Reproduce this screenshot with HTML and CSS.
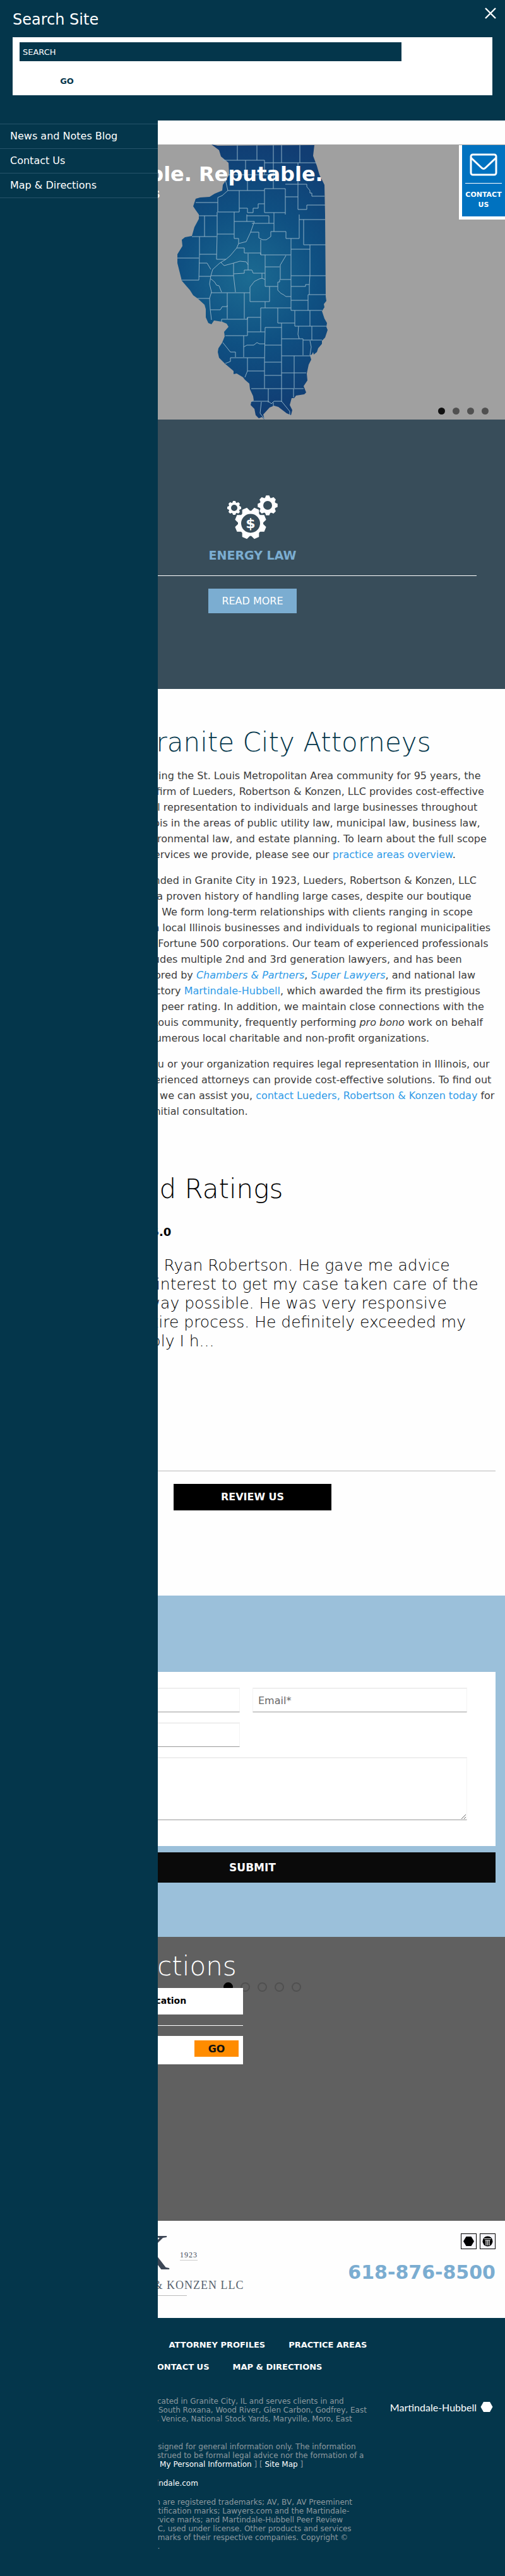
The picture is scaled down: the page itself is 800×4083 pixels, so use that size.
FILE: index.html
```
<!DOCTYPE html>
<html lang="en">
  <head>
    <meta charset="UTF-8" />
    <meta name="viewport" content="width=device-width, initial-scale=1.0" />
    <title>Lueders, Robertson &amp; Konzen, LLC</title>
    <link rel="stylesheet" href="styles.css" />
  </head>
  <body>
    <!-- Slide-out menu -->
    <nav class="drawer" aria-label="Side menu">
      <a href="#">News and Notes Blog</a>
      <a href="#">Contact Us</a>
      <a href="#">Map &amp; Directions</a>
    </nav>

    <!-- Search panel -->
    <div class="search-panel">
      <div class="search-title">Search Site</div>
      <button class="close-btn" type="button" aria-label="Close">
        <svg width="20" height="20" viewBox="0 0 20 20"><path d="M2 2L18 18M18 2L2 18" stroke="#fff" stroke-width="2.4" /></svg>
      </button>
      <form class="search-form">
        <input type="text" class="search-input" placeholder="SEARCH" aria-label="Search" />
        <button type="button" class="search-go">GO</button>
      </form>
    </div>

    <header class="header"></header>

    <a class="contact-tab" href="#">
      <svg width="44" height="36" viewBox="0 0 44 36" fill="none" stroke="#fff" stroke-width="3">
        <rect x="2" y="2" width="40" height="32" rx="3" />
        <path d="M2 7L19 23Q22 26 25 23L42 7" />
      </svg>
      <span>CONTACT US</span>
    </a>

    <section class="banner">
      <svg class="state-map" width="250" height="436" viewBox="275 229 250 436">
        <defs>
          <radialGradient id="mapFill" gradientUnits="userSpaceOnUse" cx="395" cy="440" r="215">
            <stop offset="0" stop-color="#1c6b92" />
            <stop offset="0.5" stop-color="#0f5082" />
            <stop offset="1" stop-color="#113d73" />
          </radialGradient>
        </defs>
        <path fill="url(#mapFill)" d="M335 229L345 231L498 230L496 247L502 263L506 277L514 293L515 340L516 470L517 477L513 482L514 487L510 493L514 505L518 512L517 518L519 523L515 535L510 540L510 545L504 552L502 558L497 562L496 558L494 562L491 563L493 570L489 578L486 592L487 603L481 612L485 622L482 625L469 627L466 631L462 631L459 642L463 650L461 658L454 655L441 645L434 643L427 646L417 657L419 665L415 661L410 663L405 658L403 648L397 642L398 637L402 635L401 628L396 617L395 608L388 602L385 598L375 592L370 593L370 588L357 577L347 567L345 558L346 552L352 543L356 533L355 526L362 518L359 513L352 510L339 508L335 514L330 512L326 503L326 490L324 483L313 473L306 468L301 460L288 445L285 433L281 417L281 403L289 390L288 380L293 376L304 374L308 360L315 347L315 340L310 333L306 327L310 315L317 313L332 312L340 307L352 302L353 293L357 287L363 277L362 258L350 248L347 238Z" />
        <path class="counties" d="M376 229V254M407 230V254M433 230V299M446 230V258M475 230V258M353 254H419V258H502M389 254V277M419 258V277M360 277H433M392 277V302M472 258V276M357 285L361 302H419V299H452V340M361 302L352 310L345 313V336H379V330H392V337H401V330H409V323H419M310 321H345M379 302V330M419 302V337H452M452 292H486V296L491 302V306H494V311H514M452 312H472V276M472 312V332H486V325H515M315 342H344M324 342V375M344 336V371L343 411H358M344 371H371M371 336V378M371 351H403L397 368L390 383L378 386V378H371M391 340V351M391 342H426V354M399 354H434M434 337V367M304 375H343M316 375V403L315 444H288M316 403H343M378 386L375 393L365 405L358 411L348 417L337 427L334 437L332 450L335 463L332 473L333 490L335 507M375 393H387V401H413V404H461M397 368H410V377L416 380H422L429 375V367H453V378H474V340M413 380V404M461 378V492H510M474 348H515M481 348V388H516M491 388V436L490 452V467M461 395H491M461 437H516M461 454H484V451H490M516 467H488V492M461 476H488M420 404V454H440V447H443V443M420 423H443M453 405L444 420V443H461M440 454V460L445 465L449 467L453 470H461M427 454V478H396V455L403 446L411 442L415 441L420 443M393 402V428M370 417V437L373 463M350 416L355 421L370 417L380 414L390 415L393 420M370 434L387 433V428H399L401 433H420M415 433V441M334 437H370M334 464H396M334 442L340 447L343 452L347 453L351 463M281 409H315M315 417H328L334 427M315 438H334M313 473H332M360 464V505M387 464V505M333 491H349L352 486H360V484M351 510V506H392V503H413M413 526V488H461M420 478V488M440 488V512H467M467 492V517H517M491 492V517M392 503V532H357M392 526H420M446 519H420L419 574H446M446 512V637M386 532V566M386 550L391 547H402L407 543L411 545H419M419 547H446M365 567H419M353 543L365 558H373V566M357 576L365 573V567M392 567V588L388 598M392 588H419M419 574V616M419 595H446M398 616H481M425 616V638M398 636H425L430 640L434 636H446L459 652V658M446 537H480V563M480 539H510M446 564H493M491 540L493 550L491 563M473 517L472 530L474 537M494 517V539M466 564V615M446 591H485M465 616V630M414 637L412 655L419 664M433 638V644" />
      </svg>
      <div class="banner-text">
        <div class="banner-title">Smart. Reliable. Reputable.</div>
        <div class="banner-sub">Business Attorneys</div>
      </div>
      <div class="slide-dots"><i class="active"></i><i></i><i></i><i></i></div>
    </section>

    <section class="practice">
      <svg width="80" height="71" viewBox="0 0 80 71" fill="#fff">
        <defs>
          <g id="teeth">
            <path id="tooth" d="M-7 -18L-4 -25H4L7 -18V18L4 25H-4L-7 18Z" />
            <use href="#tooth" transform="rotate(45)" />
            <use href="#tooth" transform="rotate(90)" />
            <use href="#tooth" transform="rotate(135)" />
            <circle r="20" />
          </g>
        </defs>
        <use href="#teeth" transform="translate(37 44.5) rotate(22.5)" />
        <circle cx="37" cy="44.5" r="15" fill="#384d5a" />
        <use href="#teeth" transform="translate(11 20) scale(.44)" />
        <circle cx="11" cy="20" r="5" fill="#384d5a" />
        <use href="#teeth" transform="translate(64 16) scale(.63)" />
        <circle cx="64" cy="16" r="7" fill="#384d5a" />
        <text class="gear-sign" x="37" y="52" text-anchor="middle">$</text>
      </svg>
      <h3>ENERGY LAW</h3>
      <a class="read-more" href="#">READ MORE</a>
    </section>

    <section class="about">
      <h1>Granite City Attorneys</h1>
      <p>
        Serving the St. Louis Metropolitan Area community for 95 years, the law
        firm of Lueders, Robertson &amp; Konzen, LLC provides cost-effective
        legal representation to individuals and large businesses throughout
        Illinois in the areas of public utility law, municipal law, business
        law, environmental law, and estate planning. To learn about the full
        scope of services we provide, please see our
        <a href="#">practice areas overview</a>.
      </p>
      <p>
        Founded in Granite City in 1923, Lueders, Robertson &amp; Konzen, LLC
        has a proven history of handling large cases, despite our boutique
        size. We form long-term relationships with clients ranging in scope
        from local Illinois businesses and individuals to regional
        municipalities and Fortune 500 corporations. Our team of experienced
        professionals includes multiple 2nd and 3rd generation lawyers, and has
        been honored by <a href="#"><em>Chambers &amp; Partners</em></a>,
        <a href="#"><em>Super Lawyers</em></a>, and national law directory
        <a href="#">Martindale-Hubbell</a>, which awarded the firm its
        prestigious “AV” peer rating. In addition, we maintain close
        connections with the St. Louis community, frequently performing
        <em>pro bono</em> work on behalf<br />
        of numerous local charitable and non-profit organizations.
      </p>
      <p>
        If you or your organization requires legal representation in Illinois,
        our experienced attorneys can provide cost-effective solutions. To find
        out how we can assist you,
        <a href="#">contact Lueders, Robertson &amp; Konzen today</a> for<br />
        an initial consultation.
      </p>
    </section>

    <section class="reviews">
      <h2>Reviews and Ratings</h2>
      <div class="score">Client Review Rating: 5.0</div>
      <blockquote>
        I have worked with Ryan Robertson. He gave me advice<br />
        and took a lasting interest to get my case taken care of the<br />
        true professional way possible. He was very responsive<br />
        throughout the entire process. He definitely exceeded my<br />
        expectations. Simply I h...
      </blockquote>
      <a class="review-btn" href="#">REVIEW US</a>
    </section>

    <section class="contact">
      <h2>Contact Us</h2>
      <form>
        <div class="form-box">
          <input type="text" placeholder="Name*" aria-label="Name" />
          <input type="email" placeholder="Email*" aria-label="Email" />
          <input type="tel" placeholder="Phone" aria-label="Phone" />
          <textarea placeholder="Message" aria-label="Message"></textarea>
        </div>
        <button type="button" class="submit-btn">SUBMIT</button>
      </form>
    </section>

    <section class="directions">
      <h2>Map &amp; Directions</h2>
      <div class="map-dots"><i class="active"></i><i></i><i></i><i></i><i></i></div>
      <div class="directions-form">
        <div class="office">Please Select Your Office Location</div>
        <div class="address">
          <input type="text" placeholder="Address" aria-label="Address" />
          <button type="button">GO</button>
        </div>
      </div>
    </section>

    <section class="firm-bar">
      <div class="logo">
        <div class="logo-top"><span class="logo-mark">LRK</span><span class="logo-year">1923</span></div>
        <div class="logo-name">ROBERTSON &amp; KONZEN LLC</div>
      </div>
      <div class="firm-contact">
        <div class="badges">
          <a href="#" aria-label="Martindale">
            <svg width="23" height="23" viewBox="0 0 23 23"><path d="M7.5 4H15.5L20 11.5L15.5 19H7.5L3 11.5Z" /></svg>
          </a>
          <a href="#" aria-label="Lawyers.com">
            <svg width="23" height="23" viewBox="0 0 23 23">
              <circle cx="11.5" cy="11.5" r="8" />
              <path d="M6 7.5H17M7.5 10H15.5M9 10V18M11.5 10V18M14 10V18" stroke="#fff" stroke-width="1.2" />
            </svg>
          </a>
        </div>
        <a class="phone" href="#">618-876-8500</a>
      </div>
    </section>

    <footer class="footer">
      <nav class="footer-nav" aria-label="Footer">
        <a href="#">HOME</a>
        <a href="#">ABOUT THE FIRM</a>
        <a href="#">ATTORNEY PROFILES</a>
        <a href="#">PRACTICE AREAS</a>
        <a href="#">NEWS AND NOTES BLOG</a>
        <a href="#">CONTACT US</a>
        <a href="#">MAP &amp; DIRECTIONS</a>
      </nav>
      <div class="footer-body">
        <div class="legal">
          <p>
            Lueders, Robertson &amp; Konzen, LLC is located in Granite City, IL and serves clients in and<br />
            areas including Edwardsville, Hartford, South Roxana, Wood River, Glen Carbon, Godfrey, East<br />
            Alton, Collinsville, Pontoon Beach, Troy, Venice, National Stock Yards, Maryville, Moro, East<br />
            Saint Louis, and Alton.
          </p>
          <p>
            The information from this website is designed for general information only. The information<br />
            provided on this site should not be construed to be formal legal advice nor the formation of a<br />
            lawyer/client relationship. [ <a href="#">Do Not Sell My Personal Information</a> ] [ <a href="#">Site Map</a> ]
          </p>
          <p>Attorney Websites Maintained by: <a href="#">Martindale.com</a></p>
          <p>
            Martindale-Hubbell and the Firm Design are registered trademarks; AV, BV, AV Preeminent<br />
            and AV Rated names are registered certification marks; Lawyers.com and the Martindale-<br />
            Hubbell Peer Review magazines are service marks; and Martindale-Hubbell Peer Review<br />
            Ratings are trademarks of MH Sub I, LLC, used under license. Other products and services<br />
            may be trademarks or registered trademarks of their respective companies. Copyright ©<br />
            2024 MH Sub I, LLC. All rights reserved.
          </p>
        </div>
        <a class="mh-logo" href="#">
          <span>Martindale-Hubbell</span>
          <svg width="20" height="18" viewBox="0 0 20 18" fill="#fff"><path d="M5 1H15L19.5 9L15 17H5L.5 9Z" /></svg>
        </a>
      </div>
    </footer>
  </body>
</html>
```
FILE: styles.css
```
* {
  box-sizing: border-box;
}
body {
  position: relative;
  margin: 0;
  background: #fefefe;
  color: #3c3c3c;
  font-family: "DejaVu Sans", sans-serif;
  font-size: 16px;
  line-height: 25px;
}
a {
  color: #2f9be8;
  text-decoration: none;
}
input,
textarea,
button {
  font-family: inherit;
}
button {
  border: 0;
  padding: 0;
  cursor: pointer;
}
h1,
h2 {
  margin: 0;
  font-size: 42px;
  line-height: 50px;
  font-weight: 200;
}

/* menu */
.drawer {
  position: absolute;
  z-index: 10;
  top: 0;
  bottom: 0;
  left: 0;
  width: 250px;
  padding-top: 196px;
  background: #04364b;
}
.drawer a {
  display: block;
  padding: 6px 16px 7px;
  border-top: 1px solid #26536a;
  color: #fff;
}
.drawer a:last-child {
  border-bottom: 1px solid #26536a;
}

/* search */
.search-panel {
  position: relative;
  z-index: 11;
  padding: 16px 20px 40px;
  background: #04364b;
}
.search-title {
  font-size: 24px;
  line-height: 30px;
  color: #fff;
}
.close-btn {
  position: absolute;
  top: 11px;
  right: 13px;
  height: 20px;
  background: none;
}
.close-btn svg {
  display: block;
}
.search-form {
  margin-top: 13px;
  padding: 8px 11px;
  height: 92px;
  background: #fff;
}
.search-input {
  display: block;
  width: 82%;
  height: 30px;
  padding: 0 5px;
  border: 0;
  background: #04364b;
  color: #fff;
  font-size: 13px;
}
.search-input::placeholder {
  color: #fff;
  opacity: 1;
}
.search-go {
  width: 150px;
  margin-top: 22px;
  background: none;
  color: #04364b;
  font-size: 13px;
  line-height: 20px;
  font-weight: bold;
}

.header {
  height: 38px;
  background: #fefefe;
}
.contact-tab {
  position: absolute;
  z-index: 5;
  top: 230px;
  right: 0;
  width: 73px;
  height: 118px;
  padding: 13px 5px 0;
  border: solid #fff;
  border-width: 0 0 5px 5px;
  background: #0072c0;
  color: #fff;
  text-align: center;
  font-size: 11px;
  line-height: 16px;
  font-weight: bold;
}
.contact-tab svg {
  display: block;
  margin: 0 auto 11px;
}
.contact-tab span {
  display: block;
  padding-top: 10px;
  border-top: 1px solid #fff;
}

/* banner */
.banner {
  position: relative;
  height: 436px;
  background: #a0a0a0;
}
.state-map {
  display: block;
  margin: 0 auto;
}
.counties {
  fill: none;
  stroke: #8fb0c4;
  stroke-width: 1;
}
.banner-text {
  position: absolute;
  top: 28px;
  left: 14px;
  color: #fff;
  font-weight: bold;
}
.banner-title {
  font-size: 32px;
  line-height: 38px;
}
.banner-sub {
  font-size: 22px;
  line-height: 24px;
}
.slide-dots {
  position: absolute;
  right: 26px;
  bottom: 8px;
  display: flex;
  gap: 12px;
}
.slide-dots i {
  width: 11px;
  height: 11px;
  border-radius: 50%;
  background: #505050;
}
.slide-dots .active {
  background: #101010;
}

/* practice areas */
.practice {
  display: flex;
  flex-direction: column;
  align-items: center;
  padding: 120px 45px;
  background: #384d5a;
}
.gear-sign {
  font-size: 22px;
  font-weight: bold;
}
.practice h3 {
  align-self: stretch;
  margin: 12px 0 20px;
  padding-bottom: 19px;
  border-bottom: 1px solid #fff;
  color: #7badd1;
  text-align: center;
  font-size: 19px;
  line-height: 25px;
}
.read-more {
  padding: 7px 21px;
  background: #7badd1;
  color: #fff;
}

.about {
  padding: 60px 15px 60px 215px;
}
.about h1 {
  margin-bottom: 15px;
  color: #04364b;
}
.about p {
  margin: 0 0 16px;
}
.about p:last-child {
  margin: 0;
}

/* reviews */
.reviews {
  padding: 26px 15px 135px;
  color: #000;
}
.score {
  margin: 30px 0 25px;
  font-size: 18px;
  line-height: 26px;
  font-weight: bold;
}
.reviews blockquote {
  margin: 0 0 20px;
  padding-bottom: 190px;
  border-bottom: 1px solid #b8b8b8;
  font-size: 25px;
  line-height: 30px;
  font-weight: 200;
  white-space: nowrap;
}
.review-btn {
  display: block;
  width: 250px;
  margin: 0 auto;
  padding: 8px 0 9px;
  background: #000;
  color: #fff;
  text-align: center;
  font-weight: bold;
}

/* contact form */
.contact {
  padding: 60px 15px 86px;
  background: #9bc0da;
}
.contact h2 {
  margin-bottom: 11px;
  color: #000;
}
.form-box {
  display: grid;
  grid-template-columns: 1fr 1fr;
  gap: 16px 20px;
  padding: 25px 45px 41px 25px;
  background: #fff;
}
.form-box input,
.form-box textarea {
  width: 100%;
  height: 39px;
  padding: 0 8px;
  border: 1px solid #f4f4f4;
  border-top: 2px solid #eee;
  border-bottom: 1px solid #999;
  background: #fff;
  font-size: 16px;
}
.form-box textarea {
  grid-column: 1 / 3;
  height: 100px;
  padding: 8px;
}
.form-box ::placeholder {
  color: #666;
}
.submit-btn {
  display: block;
  width: 100%;
  height: 48px;
  margin-top: 10px;
  background: #0a0a0a;
  color: #fff;
  font-size: 17px;
  font-weight: bold;
}

/* directions */
.directions {
  position: relative;
  padding: 22px 15px 248px;
  background: #606060;
}
.directions h2 {
  margin-bottom: 9px;
  color: #fff;
}
.map-dots {
  position: absolute;
  top: 72px;
  left: 354px;
  display: flex;
  gap: 12px;
}
.map-dots i {
  width: 15px;
  height: 15px;
  border: 2px solid #505050;
  border-radius: 50%;
}
.map-dots .active {
  background: #000;
  border-color: #000;
}
.directions-form {
  position: relative;
  width: 370px;
}
.office {
  padding: 8px 12px 9px;
  background: #fff;
  color: #000;
  font-size: 14px;
  font-weight: bold;
}
.directions-form::after {
  content: "";
  position: absolute;
  top: 59px;
  left: 0;
  right: 0;
  border-top: 1px solid #fff;
}
.address {
  display: flex;
  gap: 10px;
  height: 45px;
  margin-top: 34px;
  padding: 7px;
  background: #fff;
}
.address input {
  flex: 1;
  height: 26px;
  border: 0;
  font-size: 14px;
}
.address button {
  width: 70px;
  height: 26px;
  background: #ff8c00;
  color: #111;
  font-size: 16px;
  font-weight: bold;
}

/* logo and phone */
.firm-bar {
  display: flex;
  justify-content: space-between;
  height: 154px;
  padding: 20px 15px 0;
}
.logo {
  padding-left: 94px;
  color: #3d4756;
  font-family: "Liberation Serif", serif;
}
.logo-top {
  display: flex;
  height: 70px;
}
.logo-mark {
  font-size: 80px;
  line-height: 60px;
}
.logo-year {
  align-self: center;
  margin-left: 16px;
  border-bottom: 1px solid #ccc;
  font-size: 12px;
  line-height: 15px;
  letter-spacing: 1px;
}
.logo-name {
  font-size: 18px;
  line-height: 25px;
  letter-spacing: 1px;
  text-indent: 14px;
  color: #57626e;
}
.logo-name::after {
  content: "";
  display: block;
  width: 187px;
  margin-top: 3px;
  border-top: 1px solid #bbb;
}
.firm-contact {
  text-align: right;
}
.badges {
  display: flex;
  justify-content: flex-end;
  gap: 5px;
  margin-bottom: 19px;
}
.badges a {
  width: 25px;
  height: 25px;
  border: 1px solid #000;
  background: #f6f6fa;
}
.badges svg {
  display: block;
}
.phone {
  display: block;
  color: #7badd1;
  font-size: 30px;
  line-height: 36px;
  font-weight: bold;
}

/* footer */
.footer {
  padding: 25px 15px 40px;
  background: #04364b;
  color: #8d999f;
  font-size: 12px;
  line-height: 14px;
}
.footer a {
  color: #fff;
}
.footer-nav {
  display: flex;
  flex-wrap: wrap;
  column-gap: 37px;
  max-width: 600px;
  margin-bottom: 30px;
  padding-left: 10px;
  font-size: 13px;
  line-height: 35px;
  font-weight: bold;
}
.footer-body {
  display: flex;
  justify-content: space-between;
}
.legal {
  white-space: nowrap;
}
.legal p {
  margin: 0 0 16px;
}
.legal p:last-child {
  margin: 0;
}
.mh-logo {
  display: flex;
  gap: 6px;
  align-items: flex-start;
  margin: 7px 4px 0 0;
  font-family: Lato, sans-serif;
  font-size: 16px;
  line-height: 20px;
}
```
